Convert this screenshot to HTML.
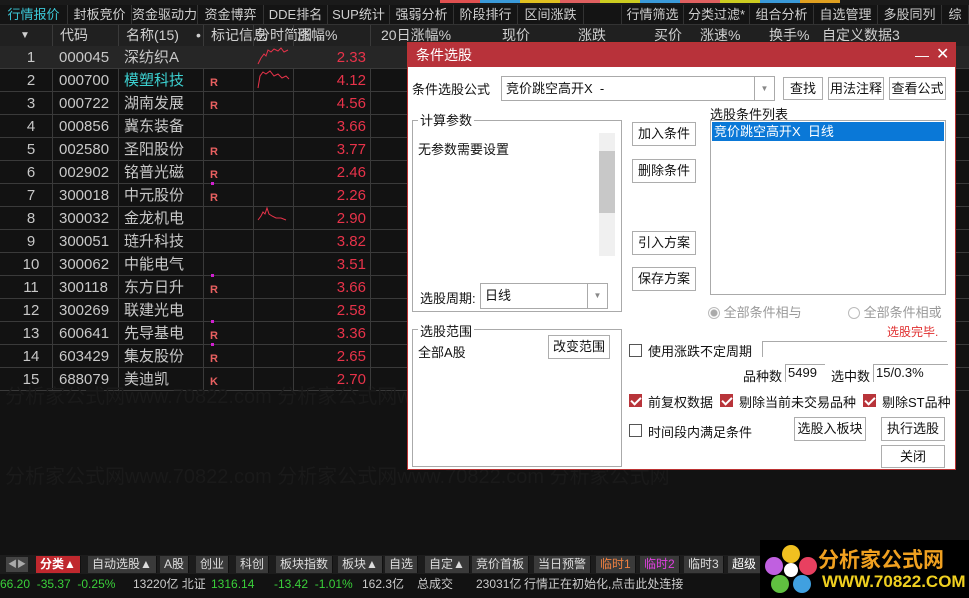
<!DOCTYPE html>
<html><head><meta charset="utf-8"><style>
*{margin:0;padding:0;box-sizing:border-box}
body{width:969px;height:598px;background:#121212;position:relative;overflow:hidden;font-family:"Liberation Sans","Noto Sans CJK SC",sans-serif;color:#c8c8c8}
.a{position:absolute;white-space:nowrap}
.tabs{left:0;top:5px;width:969px;height:20px;background:#141414;border-bottom:1px solid #333}
.tab{position:absolute;top:5px;height:20px;font-size:13px;line-height:20px;color:#cfcfcf;text-align:center;border-right:1px solid #333}
.hdr{left:0;top:25px;width:969px;height:21px;background:#202020;font-size:14px;line-height:21px;color:#d0d0d0}
.row{position:absolute;left:0;width:969px;height:23px;border-bottom:1px solid #3a3a3a;font-size:15px;line-height:23px}
.c{position:absolute;top:0;height:23px}
.vl{position:absolute;top:25px;height:366px;width:1px;background:#3a3a3a}
.red{color:#e8334a}
.dlg{left:407px;top:42px;width:549px;height:428px;background:#fff;border:1px solid #b33;color:#111;font-size:13px}
.btn{position:absolute;border:1px solid #adadad;background:#fff;font-size:13px;text-align:center;color:#111}
.box{position:absolute;border:1px solid #aaa}
.cb{position:absolute;width:13px;height:13px;border:1px solid #555;background:#fff}
.cbk{background:#b8343a;border-color:#b8343a}
.cbk:after{content:"";position:absolute;left:3px;top:0px;width:4px;height:8px;border:solid #fff;border-width:0 2px 2px 0;transform:rotate(45deg)}
.bt{position:absolute;top:556px;height:17px;font-size:12px;line-height:17px;color:#ddd;background:#3a3a3a;padding:0 4px;border-right:1px solid #111}
</style></head><body>
<div class="a" style="left:0;top:0;width:969px;height:5px;background:#1a1a1a"></div>
<div class="a" style="left:440px;top:0;width:40px;height:3px;background:#e05050"></div>
<div class="a" style="left:480px;top:0;width:40px;height:3px;background:#3a9ad9"></div>
<div class="a" style="left:520px;top:0;width:40px;height:3px;background:#e0c020"></div>
<div class="a" style="left:560px;top:0;width:40px;height:3px;background:#e06060"></div>
<div class="a" style="left:600px;top:0;width:40px;height:3px;background:#cccc20"></div>
<div class="a" style="left:640px;top:0;width:40px;height:3px;background:#3a9ad9"></div>
<div class="a" style="left:680px;top:0;width:40px;height:3px;background:#e06060"></div>
<div class="a" style="left:720px;top:0;width:40px;height:3px;background:#cccc20"></div>
<div class="a" style="left:760px;top:0;width:40px;height:3px;background:#3a9ad9"></div>
<div class="a" style="left:800px;top:0;width:40px;height:3px;background:#e0a020"></div>
<div class="a tabs"></div>
<div class="tab" style="left:0;width:68px;color:#3cc8d8">行情报价</div>
<div class="tab" style="left:68px;width:64px">封板竞价</div>
<div class="tab" style="left:132px;width:66px">资金驱动力</div>
<div class="tab" style="left:198px;width:66px">资金博弈</div>
<div class="tab" style="left:264px;width:64px">DDE排名</div>
<div class="tab" style="left:328px;width:62px">SUP统计</div>
<div class="tab" style="left:390px;width:64px">强弱分析</div>
<div class="tab" style="left:454px;width:64px">阶段排行</div>
<div class="tab" style="left:518px;width:66px">区间涨跌</div>
<div class="tab" style="left:584px;width:38px"></div>
<div class="tab" style="left:622px;width:62px">行情筛选</div>
<div class="tab" style="left:684px;width:66px">分类过滤*</div>
<div class="tab" style="left:750px;width:64px">组合分析</div>
<div class="tab" style="left:814px;width:64px">自选管理</div>
<div class="tab" style="left:878px;width:64px">多股同列</div>
<div class="tab" style="left:942px;width:27px">综</div>
<div class="a hdr">
<span class="a" style="left:20px;font-size:10px">▼</span>
<span class="a" style="left:60px">代码</span>
<span class="a" style="left:126px">名称(15)</span><span class="a" style="left:196px">•</span>
<span class="a" style="left:211px">标记信息</span>
<span class="a" style="left:256px">分时简图</span>
<span class="a" style="left:297px">涨幅%</span>
<span class="a" style="left:381px">20日涨幅%</span>
<span class="a" style="left:502px">现价</span>
<span class="a" style="left:578px">涨跌</span>
<span class="a" style="left:654px">买价</span>
<span class="a" style="left:700px">涨速%</span>
<span class="a" style="left:769px">换手%</span>
<span class="a" style="left:822px">自定义数据3</span>
</div>
<div class="vl" style="left:52px"></div><div class="vl" style="left:118px"></div><div class="vl" style="left:203px"></div><div class="vl" style="left:253px"></div><div class="vl" style="left:293px"></div><div class="vl" style="left:370px"></div>
<div id="rows"></div>
<script>
var d=[["000045","深纺织A","2.33",""],["000700","模塑科技","4.12","R"],["000722","湖南发展","4.56","R"],["000856","冀东装备","3.66",""],["002580","圣阳股份","3.77","R"],["002902","铭普光磁","2.46","R"],["300018","中元股份","2.26","R."],["300032","金龙机电","2.90",""],["300051","琏升科技","3.82",""],["300062","中能电气","3.51",""],["300118","东方日升","3.66","R."],["300269","联建光电","2.58",""],["600641","先导基电","3.36","R."],["603429","集友股份","2.65","R."],["688079","美迪凯","2.70","K"]];
var h="";d.forEach(function(r,i){var t=46+23*i;var m=r[3]?('<span class="c" style="left:210px;font-size:11px;font-weight:bold;color:#e86060;top:3px">'+(r[3].length>1?'<span style="position:absolute;top:-5px;left:1px;width:3px;height:3px;background:#d020d0"></span>':'')+r[3][0]+'</span>'):'';
h+='<div class="row" style="top:'+t+'px;'+(i==0?'background:#262626':'')+'"><span class="c" style="left:20px;width:22px;text-align:center">'+(i+1)+'</span><span class="c" style="left:59px">'+r[0]+'</span><span class="c" style="left:124px;'+(i==1?'color:#3cd0d0':'')+'">'+r[1]+'</span>'+m+'<span class="c red" style="left:300px;width:66px;text-align:right">'+r[2]+'</span></div>';});
document.getElementById("rows").innerHTML=h;
</script>
<svg class="a" style="left:256px;top:46px" width="36" height="200"><polyline fill="none" stroke="#e8334a" stroke-width="1" points="2,18 5,12 8,8 10,10 12,4 15,6 18,3 22,5 25,2 28,6 32,4"/><polyline fill="none" stroke="#e8334a" points="2,42 4,30 7,26 10,28 14,25 18,30 22,28 26,32 30,30 33,33"/><polyline fill="none" stroke="#e8334a" points="2,174 5,170 7,166 9,168 11,162 13,168 16,170 20,172 25,172 30,174"/></svg>
<div class="a" style="left:5px;top:380px;font-size:20px;color:#1a1a1a">分析家公式网www.70822.com 分析家公式网www.70822.com</div>
<div class="a" style="left:5px;top:460px;font-size:20px;color:#1a1a1a">分析家公式网www.70822.com 分析家公式网www.70822.com 分析家公式网</div>
<div class="a dlg">
<div class="a" style="left:0;top:0;width:547px;height:24px;background:#b8323a;color:#fff;font-size:14px;line-height:24px;padding-left:8px">条件选股<span class="a" style="left:507px">—</span><span class="a" style="left:528px;font-size:16px">✕</span></div>
<div class="a" style="left:4px;top:36px">条件选股公式</div>
<div class="box" style="left:93px;top:33px;width:274px;height:25px;line-height:23px;padding-left:4px">竞价跳空高开X &nbsp;-<span class="a" style="left:252px;top:0;width:20px;height:23px;border-left:1px solid #aaa;text-align:center;font-size:8px;color:#888">▼</span></div>
<div class="btn" style="left:375px;top:34px;width:40px;height:23px;line-height:21px">查找</div>
<div class="btn" style="left:420px;top:34px;width:56px;height:23px;line-height:21px">用法注释</div>
<div class="btn" style="left:481px;top:34px;width:57px;height:23px;line-height:21px">查看公式</div>
<div class="box" style="left:4px;top:77px;width:210px;height:192px"></div>
<div class="a" style="left:10px;top:67px;background:#fff;padding:0 2px">计算参数</div>
<div class="a" style="left:10px;top:96px">无参数需要设置</div>
<div class="a" style="left:191px;top:90px;width:16px;height:123px;background:#f0f0f0"><div style="margin-top:18px;height:62px;background:#c8c8c8"></div></div>
<div class="a" style="left:12px;top:245px">选股周期:</div>
<div class="box" style="left:72px;top:240px;width:128px;height:26px;line-height:24px;padding-left:4px">日线<span class="a" style="left:106px;top:0;width:20px;height:24px;border-left:1px solid #aaa;text-align:center;font-size:8px;color:#888">▼</span></div>
<div class="box" style="left:4px;top:286px;width:210px;height:138px"></div>
<div class="a" style="left:10px;top:278px;background:#fff;padding:0 2px">选股范围</div>
<div class="a" style="left:10px;top:299px">全部A股</div>
<div class="btn" style="left:140px;top:292px;width:62px;height:24px;line-height:22px">改变范围</div>
<div class="btn" style="left:224px;top:79px;width:64px;height:24px;line-height:22px">加入条件</div>
<div class="btn" style="left:224px;top:116px;width:64px;height:24px;line-height:22px">删除条件</div>
<div class="btn" style="left:224px;top:188px;width:64px;height:24px;line-height:22px">引入方案</div>
<div class="btn" style="left:224px;top:224px;width:64px;height:24px;line-height:22px">保存方案</div>
<div class="a" style="left:302px;top:61px">选股条件列表</div>
<div class="box" style="left:302px;top:77px;width:236px;height:175px"><div style="margin:1px;height:19px;background:#0a78d7;color:#fff;line-height:19px;padding-left:2px">竞价跳空高开X &nbsp;日线</div></div>
<div class="a" style="left:300px;top:259px;color:#999"><span style="display:inline-block;width:12px;height:12px;border:1px solid #bbb;border-radius:50%;vertical-align:-2px;background:radial-gradient(#aaa 3px,#fff 4px)"></span> 全部条件相与</div>
<div class="a" style="left:440px;top:259px;color:#999"><span style="display:inline-block;width:12px;height:12px;border:1px solid #bbb;border-radius:50%;vertical-align:-2px"></span> 全部条件相或</div>
<div class="a" style="left:479px;top:280px;color:#e03030;font-size:12px">选股完毕.</div>
<div class="cb" style="left:221px;top:301px"></div><div class="a" style="left:240px;top:298px">使用涨跌不定周期</div>
<div class="a" style="left:354px;top:298px;width:185px;height:16px;border-left:1px solid #aaa;border-top:1px solid #aaa"></div>
<div class="a" style="left:335px;top:323px">品种数</div><div class="a" style="left:377px;top:321px;width:40px;height:18px;border-left:1px solid #aaa;border-top:1px solid #aaa;padding-left:2px">5499</div>
<div class="a" style="left:423px;top:323px">选中数</div><div class="a" style="left:465px;top:321px;width:75px;height:18px;border-left:1px solid #aaa;border-top:1px solid #aaa;padding-left:2px">15/0.3%</div>
<div class="cb cbk" style="left:221px;top:351px"></div><div class="a" style="left:240px;top:349px">前复权数据</div>
<div class="cb cbk" style="left:312px;top:351px"></div><div class="a" style="left:331px;top:349px">剔除当前未交易品种</div>
<div class="cb cbk" style="left:455px;top:351px"></div><div class="a" style="left:474px;top:349px">剔除ST品种</div>
<div class="cb" style="left:221px;top:381px"></div><div class="a" style="left:240px;top:379px">时间段内满足条件</div>
<div class="btn" style="left:386px;top:374px;width:72px;height:24px;line-height:22px">选股入板块</div>
<div class="btn" style="left:473px;top:374px;width:64px;height:24px;line-height:22px">执行选股</div>
<div class="btn" style="left:473px;top:402px;width:64px;height:23px;line-height:21px">关闭</div>
</div>
<div class="a" style="left:0;top:555px;width:969px;height:19px;background:#1c1c1c"></div>
<div class="a" style="left:6px;top:557px;width:22px;height:15px;background:#444;color:#aaa;font-size:9px;line-height:15px;text-align:center">◀▶</div>
<div class="bt" style="left:36px;background:#c0282e;color:#fff;font-weight:bold">分类▲</div>
<div class="bt" style="left:88px">自动选股▲</div>
<div class="bt" style="left:160px">A股</div>
<div class="bt" style="left:196px">创业</div>
<div class="bt" style="left:236px">科创</div>
<div class="bt" style="left:276px">板块指数</div>
<div class="bt" style="left:338px">板块▲</div>
<div class="bt" style="left:385px">自选</div>
<div class="bt" style="left:425px">自定▲</div>
<div class="bt" style="left:472px">竞价首板</div>
<div class="bt" style="left:534px">当日预警</div>
<div class="bt" style="left:596px;color:#f08040">临时1</div>
<div class="bt" style="left:640px;color:#e040e0">临时2</div>
<div class="bt" style="left:684px">临时3</div>
<div class="bt" style="left:728px;color:#fff">超级</div>
<div class="a" style="left:0;top:574px;width:969px;height:20px;background:#121212;font-size:12px;line-height:20px;color:#ccc">
<span class="a" style="left:0;color:#3ad03a">66.20 &nbsp;-35.37 &nbsp;-0.25%</span>
<span class="a" style="left:133px">13220亿 北证</span><span class="a" style="left:211px;color:#3ad03a">1316.14</span>
<span class="a" style="left:274px;color:#3ad03a">-13.42 &nbsp;-1.01%</span><span class="a" style="left:362px">162.3亿</span>
<span class="a" style="left:417px">总成交</span><span class="a" style="left:476px">23031亿</span><span class="a" style="left:524px">行情正在初始化,点击此处连接</span>
</div>
<div class="a" style="left:760px;top:540px;width:209px;height:58px;background:#000">
<svg class="a" style="left:4px;top:4px" width="54" height="50"><circle cx="27" cy="10" r="9" fill="#f0c020"/><circle cx="44" cy="22" r="9" fill="#e84060"/><circle cx="38" cy="40" r="9" fill="#40a0e0"/><circle cx="16" cy="40" r="9" fill="#60c040"/><circle cx="10" cy="22" r="9" fill="#c060e0"/><circle cx="27" cy="26" r="7" fill="#fff"/></svg>
<div class="a" style="left:58px;top:4px;font-size:21px;font-weight:bold;color:#f0a020">分析家公式网</div>
<div class="a" style="left:62px;top:32px;font-size:17px;font-weight:bold;color:#f0d020">WWW.70822.COM</div>
</div>
</body></html>
